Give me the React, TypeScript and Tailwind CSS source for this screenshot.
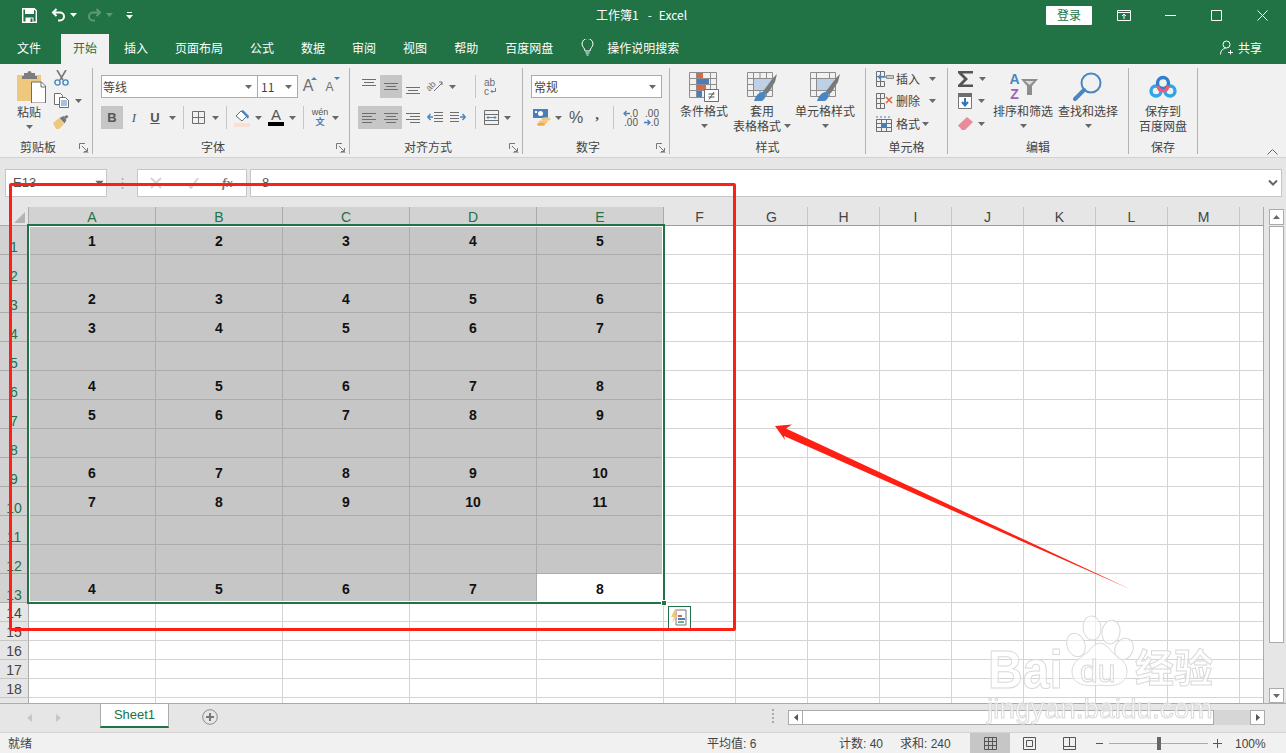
import type { ReactNode } from "react";

const rows: (number[] | null)[] = [
  [1, 2, 3, 4, 5],
  null,
  [2, 3, 4, 5, 6],
  [3, 4, 5, 6, 7],
  null,
  [4, 5, 6, 7, 8],
  [5, 6, 7, 8, 9],
  null,
  [6, 7, 8, 9, 10],
  [7, 8, 9, 10, 11],
  null,
  null,
  [4, 5, 6, 7, 8],
];
const wideCols = ["A", "B", "C", "D", "E"];
const narrowCols = ["F", "G", "H", "I", "J", "K", "L", "M"];

function Caret({ className = "" }: { className?: string }) {
  return (
    <svg width="7" height="4" viewBox="0 0 7 4" className={className}>
      <path d="M0 0h7L3.5 4z" fill="#696969" />
    </svg>
  );
}

function Slot({ w, active, children }: { w: string; active?: boolean; children?: ReactNode }) {
  return (
    <div className={`flex h-[23px] shrink-0 items-center justify-center ${w} ${active ? "bg-[#c6c6c6]" : ""}`}>
      {children}
    </div>
  );
}

function Sep({ w }: { w: string }) {
  return (
    <div className={`flex h-[23px] shrink-0 justify-center ${w}`}>
      <div className="h-full w-px bg-[#c6c6c6]" />
    </div>
  );
}

function Launcher() {
  return (
    <svg width="10" height="10" viewBox="0 0 10 10" fill="none" stroke="#777">
      <path d="M.5 6V.5H6" />
      <path d="M3 3l5 5M8.5 5v3.5H5" />
      <path d="M9.5 9.5H4" stroke="#aaa" />
    </svg>
  );
}

function Group({ w, label, launcher, children }: { w: string; label: string; launcher?: boolean; children: ReactNode }) {
  return (
    <div className={`mt-1 flex h-[86px] shrink-0 flex-col border-r border-[#b4b4b4] ${w}`}>
      <div className="flex-1">{children}</div>
      <div className={`grid h-[15px] grid-cols-[1fr_auto_1fr] items-center leading-[15px] ${launcher ? "pr-[16px]" : ""}`}>
        <span />
        <span>{label}</span>
        <span className="-mr-[13px] flex justify-end pt-[3px]">{launcher && <Launcher />}</span>
      </div>
    </div>
  );
}

function SaveIcon() {
  return (
    <svg width="15" height="15" viewBox="0 0 15 15">
      <path d="M.7.7h11.6l2 2v11.6H.7z" fill="none" stroke="#fff" strokeWidth="1.4" />
      <path d="M3 1h9v5H3zM3.5 9.5h8V14h-8z" fill="#fff" />
      <path d="M8.5 10.5h2V14h-2z" fill="#217346" />
    </svg>
  );
}

function UndoIcon({ color, flip }: { color: string; flip?: boolean }) {
  return (
    <svg width="15" height="14" viewBox="0 0 15 14" fill="none" stroke={color} strokeWidth="2" className={flip ? "-scale-x-100" : ""}>
      <path d="M5.5 1L2 4.5 5.5 8" />
      <path d="M2 4.5h7a4 4 0 0 1 0 8H7" />
    </svg>
  );
}

function PasteIcon() {
  return (
    <svg width="29" height="32" viewBox="0 0 29 32">
      <path d="M0 4h24v26H0z" fill="#edc87e" />
      <path d="M7 5V2h3.5a2 2 0 0 1 4 0H18v3h2v3H5V5z" fill="#7d7d7d" />
      <path d="M14.5 11h10l4 4v17h-14z" fill="#fff" stroke="#6e6e6e" />
      <path d="M24 11v5h5" fill="none" stroke="#6e6e6e" />
    </svg>
  );
}

function ScissorsIcon() {
  return (
    <svg width="15" height="16" viewBox="0 0 15 16" fill="none">
      <path d="M3 0l6 10M12 0L6 10" stroke="#777" strokeWidth="1.6" />
      <circle cx="3.5" cy="12.5" r="2.6" stroke="#4a86c0" strokeWidth="1.4" />
      <circle cx="11.5" cy="12.5" r="2.6" stroke="#4a86c0" strokeWidth="1.4" />
    </svg>
  );
}

function CopyIcon() {
  return (
    <svg width="15" height="15" viewBox="0 0 15 15" fill="#fff" stroke="#6e6e6e">
      <path d="M.5.5h6l2 2v9h-8z" />
      <path d="M5.5 4.5h6l3 3v7h-9z" />
      <path d="M7 8h6M7 10h6M7 12h6" stroke="#4a86c0" />
    </svg>
  );
}

function BrushIcon() {
  return (
    <svg width="16" height="14" viewBox="0 0 16 14">
      <path d="M0 8l6-5 5 6-5 5H3z" fill="#edc87e" />
      <path d="M6.5 3l4-2 3 4-2 3.5z" fill="#777" />
      <path d="M11 1.5L14 0l1.5 2-3 2z" fill="#777" />
    </svg>
  );
}

function GrowFont({ up }: { up?: boolean }) {
  return (
    <div className="flex items-start pb-[2px]">
      <span className={`text-[#6e6e6e] [font-family:'Liberation_Sans'] ${up ? "mt-[1px] text-[16px] leading-[16px]" : "mt-[3px] text-[12px] leading-[14px]"}`}>A</span>
      <svg width="6" height="3" viewBox="0 0 6 3" className={up ? "-ml-[2px]" : ""}>
        <path d={up ? "M0 3l3-3 3 3z" : "M0 0h6L3 3z"} fill="#4a7ebb" />
      </svg>
    </div>
  );
}

function BordersIcon() {
  return (
    <svg width="13" height="13" viewBox="0 0 13 13" fill="none" stroke="#6e6e6e">
      <path d="M.5.5h12v12H.5zM6.5.5v12M.5 6.5h12" />
    </svg>
  );
}

function FillIcon() {
  return (
    <svg width="16" height="18" viewBox="0 0 16 18">
      <path d="M2 7l5-5 6 5-5 5z" fill="#fff" stroke="#6e6e6e" />
      <path d="M9 1l6 6-1 3-7-8z" fill="#4a86c0" />
      <path d="M0 14h16v4H0z" fill="#fadfd3" />
    </svg>
  );
}

function FontColorIcon() {
  return (
    <div className="flex flex-col items-center leading-none">
      <span className="text-[15px] leading-[12px] text-[#555] [font-family:'Liberation_Sans']">A</span>
      <span className="mt-[1px] h-[4px] w-[16px] bg-black" />
    </div>
  );
}

function WenIcon() {
  return (
    <div className="flex flex-col items-center">
      <span className="text-[9px] leading-[9px] text-[#555] [font-family:'Liberation_Sans']">wén</span>
      <span className="text-[9px] leading-[10px] font-bold text-[#4a7ebb]">文</span>
    </div>
  );
}

function AlignIcon({ lines, dy = 0 }: { lines: [number, number][]; dy?: number }) {
  return (
    <svg width="14" height="22" viewBox="0 0 14 22" stroke="#6e6e6e" fill="none">
      {lines.map(([a, b], i) => (
        <path key={i} d={`M${a} ${6.5 + dy + i * 3}H${b}`} />
      ))}
    </svg>
  );
}

function OrientIcon() {
  return (
    <div className="flex h-[16px] w-[18px] items-center">
      <span className="-rotate-45 text-[9px] leading-[9px] text-[#6e6e6e] [font-family:'Liberation_Sans']">ab</span>
      <svg width="9" height="11" viewBox="0 0 9 11" fill="none" stroke="#6e6e6e" className="-ml-[2px]">
        <path d="M0 10L8 2M5 1h3v3" />
      </svg>
    </div>
  );
}

function WrapIcon() {
  return (
    <div className="flex w-[14px] flex-col text-[10px] leading-[9px] text-[#6e6e6e] [font-family:'Liberation_Sans']">
      <span>ab</span>
      <span className="flex items-center">
        c
        <svg width="6" height="6" viewBox="0 0 6 6" fill="none" stroke="#4a86c0" className="ml-[1px]">
          <path d="M5.5 0v3.5H1M2.5 2L1 3.5 2.5 5" />
        </svg>
      </span>
    </div>
  );
}

function IndentIcon({ right }: { right?: boolean }) {
  return (
    <svg width="16" height="13" viewBox="0 0 16 13" fill="none" className={right ? "-scale-x-100" : ""}>
      <path d="M7 1.5h9M7 4.5h9M7 7.5h9M7 10.5h9" stroke="#6e6e6e" />
      <path d="M6 6H1M3.5 3L.8 6l2.7 3" stroke="#4a86c0" strokeWidth="1.5" />
    </svg>
  );
}

function MergeIcon() {
  return (
    <svg width="15" height="15" viewBox="0 0 15 15" fill="none">
      <path d="M.5.5h14v14H.5zM.5 4.5h14M.5 10.5h14" stroke="#6e6e6e" />
      <path d="M3 7.5h9M4.5 6L3 7.5 4.5 9M10.5 6L12 7.5 10.5 9" stroke="#4a86c0" />
    </svg>
  );
}

function CurrencyIcon() {
  return (
    <svg width="18" height="17" viewBox="0 0 18 17">
      <path d="M0 0h15v9H0z" fill="#4a7ebb" />
      <circle cx="7.5" cy="4.5" r="2.5" fill="#fff" />
      <path d="M2 2h2v2H2z" fill="#fff" />
      <ellipse cx="13" cy="10" rx="4.5" ry="1.8" fill="#f2c77a" />
      <ellipse cx="10" cy="13" rx="4.5" ry="1.8" fill="#f2c77a" />
      <ellipse cx="8" cy="15.3" rx="4" ry="1.5" fill="#eda94f" />
    </svg>
  );
}

function DecimalIcon({ more }: { more?: boolean }) {
  const arrow = (
    <svg width="7" height="7" viewBox="0 0 7 7" fill="none" stroke="#4a7ebb" strokeWidth="1.3" className={more ? "" : "-scale-x-100"}>
      <path d="M0 3.5h6M3.5 1L6 3.5 3.5 6" />
    </svg>
  );
  return (
    <div className="flex h-[18px] w-[16px] flex-col text-[10px] leading-[9px] text-[#555] [font-family:'Liberation_Sans']">
      <div className="flex items-center justify-end">
        {!more && arrow}
        <span>{more ? ".00" : ".0"}</span>
      </div>
      <div className="flex items-center justify-end">
        {more && arrow}
        <span>{more ? ".0" : ".00"}</span>
      </div>
    </div>
  );
}

function TableGrid({ children, w, h }: { children: ReactNode; w: number; h: number }) {
  return (
    <svg width={w} height={h} viewBox={`0 0 ${w} ${h}`} fill="none">
      {children}
    </svg>
  );
}

function CondFormatIcon() {
  return (
    <TableGrid w={31} h={30}>
      <path d="M.5.5h27v25H.5zM.5 6.5h27M.5 12.5h27M.5 18.5h27M7.5.5v25M21.5.5v25" stroke="#8d8d8d" />
      <path d="M8 1h6v5H8zM8 13h9v5H8z" fill="#d9674a" />
      <path d="M8 7h12v5H8zM8 19h5v6H8z" fill="#4a7ebb" />
      <path d="M15.5 17.5h14v12h-14z" fill="#fff" stroke="#6e6e6e" />
      <path d="M19.5 22h6M19.5 25h6M25 20l-5 7.5" stroke="#555" />
    </TableGrid>
  );
}

function TableStyleIcon() {
  return (
    <TableGrid w={30} h={30}>
      <path d="M.5.5h25v24H.5zM.5 6.5h25M.5 12.5h25M.5 18.5h25M6.5.5v24M13 .5v24M19.5.5v24" stroke="#8d8d8d" />
      <path d="M7 7h18v11H7z" fill="#bdd0e6" />
      <path d="M14 23l3-5 9-12 4-4-2 8-7 11z" fill="#7a7a7a" />
      <path d="M7 29c2-6 6-10 11-9 2 3 0 7-3 9z" fill="#4a86c0" />
    </TableGrid>
  );
}

function CellStyleIcon() {
  return (
    <TableGrid w={30} h={30}>
      <path d="M.5.5h25v24H.5zM.5 6.5h25M.5 18.5h25M6.5.5v24M19.5.5v24" stroke="#8d8d8d" />
      <path d="M7 7h17v11H7z" fill="#bdd0e6" />
      <path d="M14 23l3-5 9-12 4-4-2 8-7 11z" fill="#7a7a7a" />
      <path d="M7 29c2-6 6-10 11-9 2 3 0 7-3 9z" fill="#4a86c0" />
    </TableGrid>
  );
}

function CellOpIcon({ kind }: { kind: "insert" | "delete" | "format" }) {
  if (kind === "format") {
    return (
      <svg width="16" height="16" viewBox="0 0 16 16" fill="none" stroke="#6e6e6e">
        <path d="M.5 3.5h15v12H.5zM.5 7.5h15M.5 11.5h15M5.5 3.5v12M10.5 3.5v12" />
        <path d="M5 7h6v5H5z" fill="#4a7ebb" stroke="none" />
        <path d="M0 1h16" stroke="#4a7ebb" strokeDasharray="2 2" />
      </svg>
    );
  }
  return (
    <svg width="18" height="16" viewBox="0 0 18 16" fill="none" stroke="#6e6e6e">
      <path d="M.5.5h4v5h-4zM4.5.5h4v5h-4zM.5 5.5h4v5h-4zM.5 10.5h4v5h-4zM4.5 10.5h4v5h-4z" />
      {kind === "insert" ? (
        <>
          <path d="M10.5 4.5h7v3h-7z" stroke="#8d8d8d" fill="#ccc" />
          <path d="M10 6H2.5M5 3.5L2.5 6 5 8.5" stroke="#4a86c0" strokeWidth="1.4" />
        </>
      ) : (
        <path d="M10 4l6 6M16 4l-6 6" stroke="#e0653f" strokeWidth="1.6" />
      )}
    </svg>
  );
}

function SigmaIcon() {
  return (
    <svg width="16" height="16" viewBox="0 0 16 16">
      <path d="M0 0h15v2.5H4.5L10 8l-5.5 5.5H15V16H0v-2L6 8 0 2z" fill="#555" />
    </svg>
  );
}

function FillDownIcon() {
  return (
    <svg width="14" height="16" viewBox="0 0 14 16" fill="none">
      <path d="M.5.5h13v15H.5z" fill="#fff" stroke="#777" />
      <path d="M0 0h14v4H0z" fill="#6e6e6e" />
      <path d="M7 5v7M4 9l3 3.5L10 9" stroke="#2f75bb" strokeWidth="2" />
    </svg>
  );
}

function EraserIcon() {
  return (
    <svg width="15" height="13" viewBox="0 0 15 13">
      <path d="M0 8.5L9 0l6 5-8 8H4z" fill="#ea8b9c" />
    </svg>
  );
}

function SortIcon() {
  return (
    <div className="flex w-[30px] items-center">
      <div className="flex w-[13px] flex-col items-center text-[14px] leading-[15px] font-bold [font-family:'Liberation_Sans']">
        <span className="text-[#4a86c0]">A</span>
        <span className="text-[#9a62b5]">Z</span>
      </div>
      <svg width="17" height="16" viewBox="0 0 17 16">
        <path d="M0 0h17l-6 7v9H6V7z" fill="#8d8d8d" />
        <path d="M4 2h9l-4.5 4z" fill="#d8d8d8" />
      </svg>
    </div>
  );
}

function FindIcon() {
  return (
    <svg width="30" height="30" viewBox="0 0 30 30" fill="none">
      <circle cx="18" cy="11" r="9.5" stroke="#4a86c0" strokeWidth="2" />
      <path d="M11 18L2 27" stroke="#4a86c0" strokeWidth="4" strokeLinecap="round" />
    </svg>
  );
}

function BaiduCloudIcon() {
  return (
    <svg width="28" height="24" viewBox="0 0 28 24" fill="none">
      <circle cx="7" cy="16" r="5" stroke="#2ea6e8" strokeWidth="3.4" />
      <circle cx="21" cy="16" r="5" stroke="#2ea6e8" strokeWidth="3.4" />
      <circle cx="14" cy="8" r="5.5" stroke="#2f7fd1" strokeWidth="3.4" />
      <path d="M19 10.5c-.5 4-2.5 5.5-5 5.5s-4.5-1.5-5-5.5" stroke="#ef5b72" strokeWidth="3.2" />
    </svg>
  );
}

function BigButton({ w, icon, children }: { w: string; icon: ReactNode; children: ReactNode }) {
  return (
    <div className={`flex shrink-0 flex-col items-center pt-[4px] leading-[14.5px] whitespace-nowrap ${w}`}>
      <div className="mb-[2px] flex h-[30px] items-center justify-center">{icon}</div>
      {children}
    </div>
  );
}

function Ribbon() {
  const center3: [number, number][] = [[0, 14], [2, 12], [0, 14], [2, 12]];
  return (
    <div className="flex h-[94px] border-b border-[#d2d2d2] bg-[#f1f1f1]">
      <Group w="w-[93px]" label="剪贴板" launcher>
        <div className="flex">
          <div className="ml-[17px] flex w-[29px] flex-col pt-[3px] leading-[14px]">
            <PasteIcon />
            <span className="mt-[2px] whitespace-nowrap">粘贴</span>
            <Caret className="mt-[6px] ml-[9px]" />
          </div>
          <div className="ml-[7px] flex flex-col items-center gap-[7px] pt-[2px]">
            <ScissorsIcon />
            <div className="flex items-center">
              <CopyIcon />
              <Caret className="ml-[6px] -mr-[14px]" />
            </div>
            <BrushIcon />
          </div>
        </div>
      </Group>
      <Group w="w-[257px]" label="字体" launcher>
        <div className="flex pt-[7px] pl-[8px]">
          <div className="flex h-[23px] w-[157px] items-center justify-between border border-[#ababab] bg-white pr-[5px] pl-[1px]">
            <span>等线</span>
            <Caret />
          </div>
          <div className="-ml-px flex h-[23px] w-[41px] items-center justify-between border border-[#ababab] bg-white pr-[5px] pl-[3px]">
            <span>11</span>
            <Caret />
          </div>
          <Slot w="w-[24px]"><GrowFont up /></Slot>
          <Slot w="w-[21px]"><GrowFont /></Slot>
        </div>
        <div className="mt-[8px] flex pl-[8px]">
          <Slot w="w-[22px]" active>
            <span className="text-[13px] font-bold text-[#555] [font-family:'Liberation_Sans']">B</span>
          </Slot>
          <Slot w="w-[22px]">
            <span className="text-[13px] text-[#555] italic [font-family:'Liberation_Serif']">I</span>
          </Slot>
          <Slot w="w-[20px]">
            <span className="text-[13px] font-bold text-[#555] underline [font-family:'Liberation_Sans']">U</span>
          </Slot>
          <Slot w="w-[14px]"><Caret /></Slot>
          <Sep w="w-[9px]" />
          <Slot w="w-[20px]"><BordersIcon /></Slot>
          <Slot w="w-[14px]"><Caret /></Slot>
          <Sep w="w-[9px]" />
          <Slot w="w-[22px]"><FillIcon /></Slot>
          <Slot w="w-[10px]"><Caret /></Slot>
          <Slot w="w-[26px]"><FontColorIcon /></Slot>
          <Slot w="w-[7px]"><Caret /></Slot>
          <Sep w="w-[14px]" />
          <Slot w="w-[20px]"><WenIcon /></Slot>
          <Slot w="w-[10px]"><Caret /></Slot>
        </div>
      </Group>
      <Group w="w-[173px]" label="对齐方式" launcher>
        <div className="flex pt-[7px] pl-[8px]">
          <Slot w="w-[22px]"><AlignIcon lines={center3.slice(0, 3)} dy={-3} /></Slot>
          <Slot w="w-[22px]" active><AlignIcon lines={center3.slice(0, 3)} dy={1} /></Slot>
          <Slot w="w-[22px]"><AlignIcon lines={center3.slice(0, 3)} dy={5} /></Slot>
          <Slot w="w-[22px]"><OrientIcon /></Slot>
          <Slot w="w-[12px]"><Caret /></Slot>
          <div className="ml-[12px]"><Sep w="w-[11px]" /></div>
          <Slot w="w-[20px]"><WrapIcon /></Slot>
        </div>
        <div className="mt-[8px] flex pl-[8px]">
          <Slot w="w-[22px]" active><AlignIcon lines={[[0, 14], [0, 10], [0, 14], [0, 10]]} /></Slot>
          <Slot w="w-[22px]" active><AlignIcon lines={center3} /></Slot>
          <Slot w="w-[22px]"><AlignIcon lines={[[0, 14], [4, 14], [0, 14], [4, 14]]} /></Slot>
          <Slot w="w-[22px]"><IndentIcon /></Slot>
          <Slot w="w-[24px]"><IndentIcon right /></Slot>
          <Sep w="w-[11px]" />
          <Slot w="w-[20px]"><MergeIcon /></Slot>
          <Slot w="w-[12px]"><Caret /></Slot>
        </div>
      </Group>
      <Group w="w-[147px]" label="数字" launcher>
        <div className="flex pt-[7px] pl-[8px]">
          <div className="flex h-[23px] w-[131px] items-center justify-between border border-[#ababab] bg-white pr-[5px] pl-[2px]">
            <span>常规</span>
            <Caret />
          </div>
        </div>
        <div className="mt-[8px] flex pl-[8px]">
          <Slot w="w-[22px]"><CurrencyIcon /></Slot>
          <Slot w="w-[10px]"><Caret /></Slot>
          <div className="w-[2px]" />
          <Slot w="w-[22px]">
            <span className="text-[16px] text-[#555] [font-family:'Liberation_Sans']">%</span>
          </Slot>
          <Slot w="w-[20px]">
            <span className="-mt-[6px] text-[15px] font-bold text-[#555] [font-family:'Liberation_Serif']">,</span>
          </Slot>
          <Sep w="w-[12px]" />
          <Slot w="w-[22px]"><DecimalIcon /></Slot>
          <Slot w="w-[20px]"><DecimalIcon more /></Slot>
        </div>
      </Group>
      <Group w="w-[196px]" label="样式">
        <div className="flex">
          <BigButton w="w-[68px]" icon={<CondFormatIcon />}>
            <span>条件格式</span>
            <Caret className="mt-[5px]" />
          </BigButton>
          <BigButton w="w-[48px]" icon={<TableStyleIcon />}>
            <span>套用</span>
            <span className="flex items-center gap-[3px]">表格格式<Caret /></span>
          </BigButton>
          <BigButton w="w-[78px]" icon={<CellStyleIcon />}>
            <span>单元格样式</span>
            <Caret className="mt-[5px]" />
          </BigButton>
        </div>
      </Group>
      <Group w="w-[82px]" label="单元格">
        <div className="-mt-px flex flex-col pl-[10px]">
          <div className="flex h-[23px] items-center">
            <CellOpIcon kind="insert" />
            <span className="ml-[2px]">插入</span>
            <Caret className="ml-[9px]" />
          </div>
          <div className="flex h-[22px] items-center">
            <CellOpIcon kind="delete" />
            <span className="ml-[2px]">删除</span>
            <Caret className="ml-[9px]" />
          </div>
          <div className="flex h-[23px] items-center">
            <CellOpIcon kind="format" />
            <span className="ml-[4px]">格式</span>
            <Caret className="ml-[2px]" />
          </div>
        </div>
      </Group>
      <Group w="w-[181px]" label="编辑">
        <div className="flex">
          <div className="-mt-px w-[45px] pl-[10px]">
            <div className="flex h-[23px] items-center">
              <SigmaIcon />
              <Caret className="ml-[5px]" />
            </div>
            <div className="flex h-[22px] items-center">
              <FillDownIcon />
              <Caret className="ml-[6px]" />
            </div>
            <div className="flex h-[23px] items-center">
              <EraserIcon />
              <Caret className="ml-[5px]" />
            </div>
          </div>
          <BigButton w="w-[60px]" icon={<SortIcon />}>
            <span>排序和筛选</span>
            <Caret className="mt-[5px]" />
          </BigButton>
          <div className="w-[5px]" />
          <BigButton w="w-[60px]" icon={<FindIcon />}>
            <span>查找和选择</span>
            <Caret className="mt-[5px]" />
          </BigButton>
        </div>
      </Group>
      <Group w="w-[69px]" label="保存">
        <BigButton w="w-full" icon={<BaiduCloudIcon />}>
          <span>保存到</span>
          <span>百度网盘</span>
        </BigButton>
      </Group>
      <div className="flex flex-1 items-end justify-end pr-[8px] pb-[2px]">
        <svg width="11" height="6" viewBox="0 0 11 6" fill="none" stroke="#666">
          <path d="M.5 5.5l5-5 5 5" />
        </svg>
      </div>
    </div>
  );
}

function TitleBar() {
  return (
    <div className="flex h-[34px] items-center bg-[#217346] pb-[4px] text-white">
      <div className="flex w-[596px] items-center">
        <div className="ml-[22px]"><SaveIcon /></div>
        <div className="ml-[14px]"><UndoIcon color="#fff" /></div>
        <Caret className="ml-[4px] [&>path]:fill-white" />
        <div className="ml-[10px]"><UndoIcon color="#5c9a7a" flip /></div>
        <Caret className="ml-[4px] [&>path]:fill-[#5c9a7a]" />
        <svg width="7" height="7" viewBox="0 0 7 7" className="ml-[13px]" fill="#fff">
          <path d="M1 0h5v1H1zM0 3h7L3.5 7z" />
        </svg>
      </div>
      <span>工作簿1</span>
      <span className="ml-[9px]">-</span>
      <span className="ml-[7px]">Excel</span>
      <div className="ml-auto flex items-center">
        <div className="flex h-[19px] w-[46px] items-center justify-center rounded-[1px] bg-white text-[#217346]">登录</div>
        <svg width="14" height="11" viewBox="0 0 14 11" fill="none" stroke="#fff" className="ml-[25px]">
          <path d="M.5.5h13v10H.5zM.5 2.5h13M7 9V4.5M5 6l2-2 2 2" />
        </svg>
        <svg width="11" height="1" viewBox="0 0 11 1" className="ml-[34px]"><path d="M0 0h11v1H0z" fill="#fff" /></svg>
        <svg width="11" height="11" viewBox="0 0 11 11" fill="none" stroke="#fff" className="ml-[35px]"><path d="M.5.5h10v10H.5z" /></svg>
        <svg width="11" height="11" viewBox="0 0 11 11" fill="none" stroke="#fff" className="mr-[18px] ml-[35px]"><path d="M.5.5l10 10M10.5.5l-10 10" /></svg>
      </div>
    </div>
  );
}

function Tabs() {
  const tabs = ["插入", "页面布局", "公式", "数据", "审阅", "视图", "帮助", "百度网盘"];
  return (
    <div className="flex h-[30px] items-center bg-[#217346] text-white">
      <span className="ml-[17px] pb-[3px]">文件</span>
      <div className="ml-[20px] flex h-full items-center bg-[#f1f1f1] px-[12px] pb-[3px] text-[#217346]">开始</div>
      <div className="ml-[14px] flex gap-[27px] pb-[3px] pl-[1px]">
        {tabs.map((t) => (
          <span key={t}>{t}</span>
        ))}
      </div>
      <svg width="13" height="17" viewBox="0 0 13 17" fill="none" stroke="#fff" className="mb-[3px] ml-[28px]">
        <path d="M4 12c0-3-3-4-3-7a5.5 5.5 0 0 1 11 0c0 3-3 4-3 7zM4.5 14h4M5.5 16h2" />
      </svg>
      <span className="ml-[13px] pb-[3px]">操作说明搜索</span>
      <div className="mr-[24px] ml-auto flex items-center gap-[4px] pb-[3px]">
        <svg width="14" height="15" viewBox="0 0 14 15" fill="none" stroke="#fff">
          <circle cx="6.5" cy="4.5" r="3.5" />
          <path d="M.5 14.5c0-4 2.5-6 5-6M10.5 10v4.5M8 12.5h5" />
        </svg>
        <span>共享</span>
      </div>
    </div>
  );
}

function FormulaBar() {
  return (
    <div className="flex h-[49px] items-start bg-[#e6e6e6] pt-[11px] text-[13px] text-[#555] [font-family:'Liberation_Sans','Noto_Sans_CJK_SC',sans-serif]">
      <div className="ml-[5px] flex h-[28px] w-[102px] items-center justify-between border border-[#c6c6c6] bg-white pr-[3px] pl-[7px]">
        <span>E13</span>
        <Caret className="scale-125" />
      </div>
      <div className="flex h-[28px] w-[30px] items-center justify-center text-[#a9a9a9]">⋮</div>
      <div className="flex h-[28px] w-[110px] items-center border border-[#c6c6c6] bg-white">
        <svg width="12" height="12" viewBox="0 0 12 12" stroke="#d4d4d4" strokeWidth="2" className="ml-[12px]"><path d="M1 1l10 10M11 1L1 11" /></svg>
        <svg width="12" height="12" viewBox="0 0 12 12" stroke="#d4d4d4" strokeWidth="2" fill="none" className="ml-[25px]"><path d="M1 7l3 4 7-10" /></svg>
        <span className="ml-[23px] font-bold text-[#777] italic [font-family:'Liberation_Serif']">fx</span>
      </div>
      <div className="ml-[3px] flex h-[28px] w-[1032px] items-center justify-between border border-[#c6c6c6] bg-white pr-[3px] pl-[11px]">
        <span>8</span>
        <svg width="10" height="6" viewBox="0 0 10 6" fill="none" stroke="#666" strokeWidth="2"><path d="M1 .5l4 4 4-4" /></svg>
      </div>
    </div>
  );
}

function Sheet() {
  const extraRows = [14, 15, 16, 17, 18, 19];
  return (
    <div className="flex h-[496px] bg-[#e6e6e6] [font-family:'Liberation_Sans',sans-serif]">
      <div className="relative h-full w-[1264px] overflow-hidden border-r border-[#ababab]">
        {/* column heads */}
        <div className="flex h-[19px]">
          <div className="flex w-[29px] items-end justify-end border-r border-b border-[#ababab] bg-[#e6e6e6] pr-[3px] pb-[2px]">
            <svg width="11" height="11" viewBox="0 0 11 11"><path d="M11 0v11H0z" fill="#b4b4b4" /></svg>
          </div>
          {wideCols.map((c) => (
            <div key={c} className="flex w-[127px] items-end justify-center border-r border-b border-r-[#ababab] border-b-[#217346] bg-[#d2d2d2] text-[14px] leading-[16px] text-[#217346]">{c}</div>
          ))}
          {narrowCols.map((c) => (
            <div key={c} className="flex w-[72px] items-end justify-center border-r border-b border-r-[#c6c6c6] border-b-[#9b9b9b] bg-[#e6e6e6] text-[14px] leading-[16px] text-[#444]">{c}</div>
          ))}
          <div className="flex-1 border-b border-[#9b9b9b]" />
        </div>
        {/* selected rows */}
        {rows.map((r, i) => (
          <div key={i} className="flex h-[29px]">
            <div className="flex w-[29px] items-end justify-center border-r border-b border-[#ababab] bg-[#d2d2d2] text-[14px] leading-[13px] text-[#217346]">{i + 1}</div>
            {wideCols.map((c, j) => {
              const blank = i === 12 && j === 4;
              return (
                <div
                  key={c}
                  className={`flex w-[127px] items-center justify-center border-r border-b pt-[2px] text-[14px] font-bold text-[#111] ${blank ? "border-[#d4d4d4] bg-white" : "border-[#ababab] bg-[#c6c6c6]"}`}
                >
                  {r ? r[j] : ""}
                </div>
              );
            })}
            {narrowCols.map((c) => (
              <div key={c} className="w-[72px] border-r border-b border-[#d4d4d4] bg-white" />
            ))}
            <div className="flex-1 border-b border-[#d4d4d4] bg-white" />
          </div>
        ))}
        {extraRows.map((n) => (
          <div key={n} className="flex h-[19px]">
            <div className="flex w-[29px] items-center justify-center border-r border-b border-r-[#ababab] border-b-[#c6c6c6] bg-[#e6e6e6] pt-[2px] text-[14px] leading-[16px] text-[#444]">{n < 19 ? n : ""}</div>
            {wideCols.map((c) => (
              <div key={c} className="w-[127px] border-r border-b border-[#d4d4d4] bg-white" />
            ))}
            {narrowCols.map((c) => (
              <div key={c} className="w-[72px] border-r border-b border-[#d4d4d4] bg-white" />
            ))}
            <div className="flex-1 border-b border-[#d4d4d4] bg-white" />
          </div>
        ))}
        {/* selection outline */}
        <div className="absolute top-[17px] left-[27px] h-[380px] w-[638px] border-2 border-[#217346]">
          <div className="h-full w-full border border-white" />
        </div>
        <div className="absolute top-[393px] left-[661px] h-[6px] w-[6px] border border-white bg-[#217346]" />
        {/* quick analysis button */}
        <div className="absolute top-[399px] left-[668px] flex h-[23px] w-[23px] items-center justify-center border border-[#217346] bg-white">
          <svg width="17" height="17" viewBox="0 0 17 17">
            <path d="M5 1h10v15H5z" fill="#fff" stroke="#777" />
            <path d="M4 0L0 8h3l-2 6 6-8H4l2-6z" fill="#edc87e" />
            <path d="M7 6h4v2H7z" fill="#d9674a" />
            <path d="M7 9h7v2H7z" fill="#4a7ebb" />
            <path d="M7 12h6v2H7z" fill="#6fae8e" />
          </svg>
        </div>
      </div>
      {/* vertical scrollbar */}
      <div className="flex flex-1 flex-col items-center pt-[2px] pl-[2px]">
        <div className="flex h-[16px] w-[15px] items-center justify-center border border-[#ababab] bg-white">
          <Caret className="rotate-180" />
        </div>
        <div className="mt-[1px] h-[417px] w-[15px] border border-[#ababab] bg-white" />
        <div className="flex-1" />
        <div className="flex h-[15px] w-[15px] items-center justify-center border border-[#ababab] bg-white">
          <Caret />
        </div>
      </div>
    </div>
  );
}

function SheetTabs() {
  return (
    <div className="flex h-[29px] items-start border-t border-[#ababab] bg-[#e6e6e6]">
      <svg width="5" height="8" viewBox="0 0 5 8" className="mt-[10px] ml-[27px]"><path d="M5 0v8L0 4z" fill="#c6c6c6" /></svg>
      <svg width="5" height="8" viewBox="0 0 5 8" className="mt-[10px] ml-[24px]"><path d="M0 0v8l5-4z" fill="#c6c6c6" /></svg>
      <div className="-mt-px ml-[39px] flex h-[25px] w-[69px] items-center justify-center border-x border-t border-b-2 border-x-[#ababab] border-t-[#ababab] border-b-[#217346] bg-white text-[13px] text-[#217346] [font-family:'Liberation_Sans']">Sheet1</div>
      <svg width="16" height="16" viewBox="0 0 16 16" fill="none" stroke="#8a8a8a" className="mt-[5px] ml-[33px]">
        <circle cx="8" cy="8" r="7.3" />
        <path d="M8 4v8M4 8h8" strokeWidth="2" stroke="#777" />
      </svg>
      <div className="mt-[5px] ml-[554px] h-[14px] w-[2px] border-l-2 border-dotted border-[#aaa]" />
      <div className="mt-[6px] ml-[14px] flex h-[15px] w-[477px] items-stretch bg-[#d6d6d6]">
        <div className="flex w-[15px] items-center justify-center border border-[#ababab] bg-white">
          <svg width="4" height="7" viewBox="0 0 4 7"><path d="M4 0v7L0 3.5z" fill="#555" /></svg>
        </div>
        <div className="w-[411px] border-y border-r border-[#ababab] bg-white" />
        <div className="flex-1" />
        <div className="flex w-[15px] items-center justify-center border border-[#ababab] bg-white">
          <svg width="4" height="7" viewBox="0 0 4 7"><path d="M0 0v7l4-3.5z" fill="#555" /></svg>
        </div>
      </div>
    </div>
  );
}

function StatusBar() {
  return (
    <div className="flex h-[22px] items-center border-t border-[#d2d2d2] bg-[#f1f1f1] [font-family:'Liberation_Sans','Noto_Sans_CJK_SC',sans-serif]">
      <span className="ml-[8px] w-[699px]">就绪</span>
      <span className="w-[132px]">平均值: 6</span>
      <span className="w-[61px]">计数: 40</span>
      <span className="w-[70px]">求和: 240</span>
      <div className="flex h-full w-[40px] items-center justify-center bg-[#c6c6c6]">
        <svg width="13" height="13" viewBox="0 0 13 13" fill="none" stroke="#555"><path d="M.5.5h12v12H.5zM4.5.5v12M8.5.5v12M.5 4.5h12M.5 8.5h12" /></svg>
      </div>
      <div className="flex w-[39px] justify-center">
        <svg width="13" height="13" viewBox="0 0 13 13" fill="none" stroke="#555"><path d="M.5.5h12v12H.5zM3.5 3.5h6v6h-6z" /></svg>
      </div>
      <div className="flex w-[40px] justify-center">
        <svg width="13" height="13" viewBox="0 0 13 13" fill="none" stroke="#555"><path d="M.5.5h12v12H.5zM.5 9.5h12M6.5.5v9" /></svg>
      </div>
      <span className="ml-[7px] h-px w-[7px] bg-[#555]" />
      <div className="relative ml-[6px] h-px w-[99px] bg-[#aaa]">
        <div className="absolute top-[-6px] left-[48px] h-[13px] w-[4px] bg-[#666]" />
      </div>
      <svg width="9" height="9" viewBox="0 0 9 9" stroke="#555" className="ml-[5px]"><path d="M4.5 0v9M0 4.5h9" /></svg>
      <span className="ml-[13px]">100%</span>
    </div>
  );
}

function Annotations() {
  return (
    <>
      <div className="absolute top-[183px] left-[9px] h-[448px] w-[727px] rounded-[2px] border-[3px] border-[#ff2015]" />
      <svg width="1286" height="753" viewBox="0 0 1286 753" className="pointer-events-none absolute top-0 left-0">
        <path d="M775 426L792 424.5 786 428.5 1131 589.5 784 436 785 440z" fill="#ff2015" />
      </svg>
    </>
  );
}

function Watermark() {
  const stroke = "text-white/60 [-webkit-text-stroke:1px_#d9d9d9]";
  return (
    <div className="pointer-events-none absolute top-[617px] left-[985px] h-[110px] w-[235px] font-bold blur-[0.4px] [font-family:'Liberation_Sans','Noto_Sans_CJK_SC',sans-serif]">
      <span className={`absolute top-[28px] left-[3px] origin-left scale-x-[.89] text-[54px] leading-[48px] ${stroke}`}>Bai</span>
      <svg width="72" height="74" viewBox="0 0 72 74" fill="#fff" fillOpacity=".6" stroke="#d9d9d9" className="absolute top-[-2px] left-[79px]">
        <ellipse cx="12" cy="30" rx="9" ry="12" transform="rotate(-20 12 30)" />
        <ellipse cx="28" cy="13" rx="9" ry="12" transform="rotate(-5 28 13)" />
        <ellipse cx="47" cy="17" rx="9" ry="12" transform="rotate(10 47 17)" />
        <ellipse cx="60" cy="34" rx="9" ry="11" transform="rotate(25 60 34)" />
        <path d="M8 56C8 44 24 40 28 32Q36 24 44 32C50 42 63 44 63 56C63 70 50 72 36 70C22 72 8 70 8 56z" />
      </svg>
      <span className={`absolute top-[38px] left-[95px] text-[32px] leading-[32px] font-normal ${stroke}`}>du</span>
      <span className={`absolute top-[29px] left-[150px] text-[39px] leading-[46px] whitespace-nowrap ${stroke}`}>经验</span>
      <span className={`absolute top-[76px] left-[2px] text-[28px] leading-[32px] font-normal whitespace-nowrap ${stroke}`}>jingyan.baidu.com</span>
    </div>
  );
}

export default function App() {
  return (
    <div className="relative h-[753px] w-[1286px] overflow-hidden text-[12px] text-[#444] [font-family:'Noto_Sans_CJK_SC',sans-serif]">
      <TitleBar />
      <Tabs />
      <Ribbon />
      <FormulaBar />
      <Sheet />
      <SheetTabs />
      <StatusBar />
      <Annotations />
      <Watermark />
    </div>
  );
}
